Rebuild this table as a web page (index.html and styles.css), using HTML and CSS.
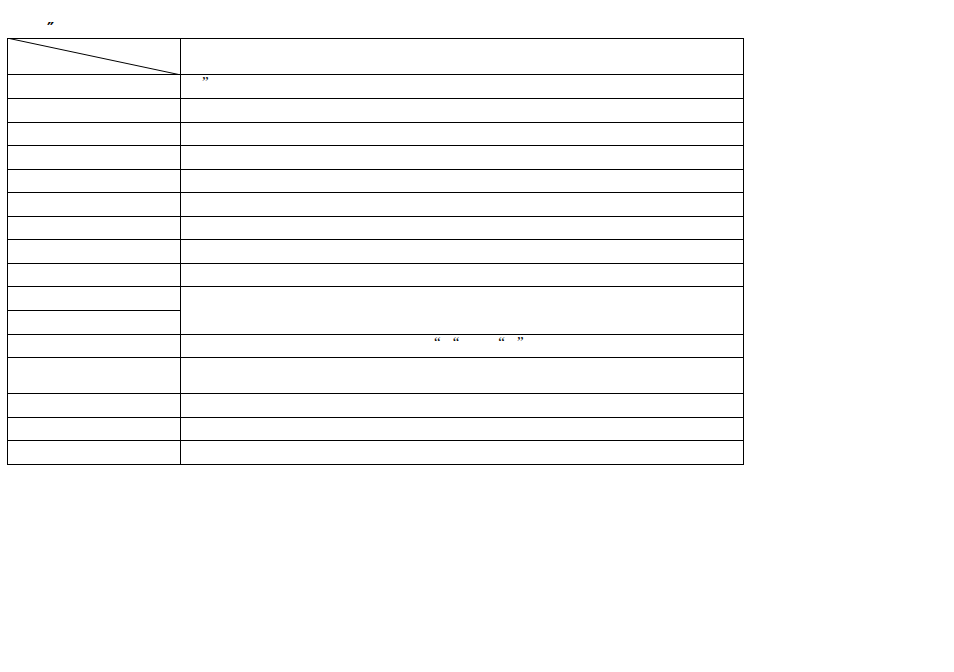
FILE: index.html
```html
<!DOCTYPE html>
<html>
<head>
<meta charset="utf-8">
<link rel="stylesheet" href="styles.css">
</head>
<body>
<p class="title"><span class="mark">″</span></p>
<div class="grid">
  <div class="cell head h35"><svg class="diag" viewBox="0 0 100 100" preserveAspectRatio="none"><line x1="0" y1="0" x2="100" y2="100" stroke="#000" stroke-width="1" vector-effect="non-scaling-stroke"/></svg></div>
  <div class="cell h35"></div>
  <div class="cell h23"></div>
  <div class="cell h23 txt pad-q"><span>”</span></div>
  <div class="cell h23"></div><div class="cell h23"></div>
  <div class="cell h22"></div><div class="cell h22"></div>
  <div class="cell h23"></div><div class="cell h23"></div>
  <div class="cell h22"></div><div class="cell h22"></div>
  <div class="cell h23"></div><div class="cell h23"></div>
  <div class="cell h22"></div><div class="cell h22"></div>
  <div class="cell h23"></div><div class="cell h23"></div>
  <div class="cell h22"></div><div class="cell h22"></div>
  <div class="cell h23"></div><div class="cell span2"></div>
  <div class="cell h23"></div>
  <div class="cell h22"></div>
  <div class="cell h22 txt quotes"><span>“</span><span class="g12">“</span><span class="g39">“</span><span class="g12">”</span></div>
  <div class="cell h35"></div><div class="cell h35"></div>
  <div class="cell h23"></div><div class="cell h23"></div>
  <div class="cell h22"></div><div class="cell h22"></div>
  <div class="cell h23"></div><div class="cell h23"></div>
</div>
</body>
</html>
```

FILE: styles.css
```css
html, body {
  margin: 0;
  padding: 0;
  background: #fff;
  font-family: "Liberation Serif", "DejaVu Serif", serif;
  color: #000;
}
.title {
  margin: 0;
  height: 38px;
  box-sizing: border-box;
  padding: 20px 0 0 47px;
  font-size: 17px;
  line-height: 17px;
}
.mark {
  font-family: "DejaVu Serif", serif;
  font-weight: bold;
  font-size: 16px;
}
.grid {
  margin-left: 7px;
  width: 737px;
  box-sizing: border-box;
  display: grid;
  grid-template-columns: 172px 562px;
  gap: 1px;
  padding: 1px;
  background: #000;
}
.cell {
  background: #fff;
  position: relative;
  font-size: 15px;
  line-height: 15px;
}
.h35 { height: 35px; }
.h23 { height: 23px; }
.h22 { height: 22px; }
.span2 { grid-row: span 2; }
.diag {
  position: absolute;
  left: -1px;
  top: -1px;
  width: calc(100% + 2px);
  height: calc(100% + 2px);
}
.txt { display: flex; align-items: flex-start; padding-top: 0; box-sizing: border-box; }
.pad-q { padding-left: 21px; }
.quotes { padding-left: 253px; }
.g12 { margin-left: 12px; }
.g39 { margin-left: 39px; }
```
